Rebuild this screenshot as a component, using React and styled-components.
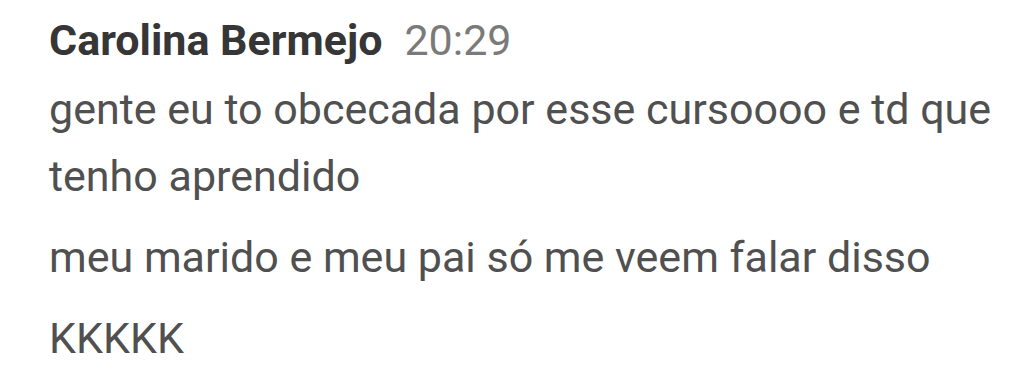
import styled, { createGlobalStyle } from "styled-components";

const GlobalStyle = createGlobalStyle`
  html, body {
    margin: 0;
    padding: 0;
    background: #ffffff;
  }
  body {
    font-family: Roboto, "Noto Sans", Arial, sans-serif;
  }
`;

const messages = [
  "gente eu to obcecada por esse cursoooo e td que tenho aprendido",
  "meu marido e meu pai só me veem falar disso",
  "KKKKK",
];

export default function App() {
  return (
    <>
      <GlobalStyle />
      <MessageGroup>
        <Header>
          <Author>Carolina Bermejo</Author>
          <Time>20:29</Time>
        </Header>
        {messages.map((text, i) => (
          <Message key={i}>{text}</Message>
        ))}
      </MessageGroup>
    </>
  );
}

const MessageGroup = styled.section`
  display: flex;
  flex-direction: column;
  gap: 14px;
  padding: 7px 0 0 49px;
  width: 960px;
`;

const Header = styled.div`
  display: flex;
  align-items: baseline;
  gap: 22px;
  line-height: 67px;
  margin-bottom: -12px;
`;

const Author = styled.span`
  font-size: 43px;
  font-weight: 700;
  color: #363636;
`;

const Time = styled.span`
  font-size: 43px;
  font-weight: 400;
  color: #7a7a7a;
`;

const Message = styled.p`
  margin: 0;
  font-size: 43px;
  line-height: 67px;
  color: #505050;
`;
